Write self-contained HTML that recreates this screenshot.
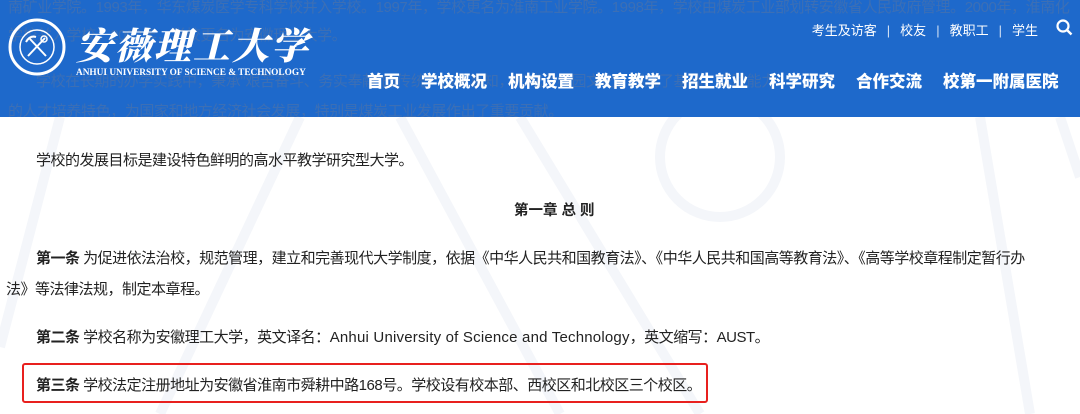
<!DOCTYPE html>
<html><head><meta charset="utf-8"><style>
*{margin:0;padding:0;box-sizing:border-box}
body{width:1080px;height:414px;overflow:hidden;background:#fff;position:relative;font-family:"Liberation Sans","Noto Sans CJK SC",sans-serif;color:#222}
.hdr{position:absolute;left:0;top:0;width:1080px;height:117px;background:#1e69cb;overflow:hidden}
.bg{position:absolute;left:8px;font-size:15px;color:#3c6fb5;white-space:nowrap;letter-spacing:-0.4px}
.logo{position:absolute;left:8px;top:18px}
.title{position:absolute;left:76px;top:16px;font-family:"Noto Serif CJK SC",serif;font-weight:900;font-size:37px;color:#fff;letter-spacing:2px;font-style:italic}
.en{position:absolute;left:76px;top:68px;font-family:"Liberation Serif",serif;font-weight:bold;font-size:9.3px;color:#fff}
.top{position:absolute;right:42px;top:20px;color:#fff;font-size:13px}
.top span{margin:0 10px;opacity:.8}
.nav{position:absolute;left:367px;top:68px;color:#fff;font-weight:bold;font-size:16.5px;white-space:nowrap}
.nav b{margin-right:21px}
.t{position:absolute;font-size:15px;white-space:nowrap;letter-spacing:-0.5px}
.t .e{letter-spacing:0.2px}
.box{position:absolute;left:22px;top:363px;width:686px;height:40px;border:2px solid #e8201e;border-radius:3px}
.wm{position:absolute;left:0;top:117px}
</style></head><body>
<svg class="wm" width="1080" height="297"><g stroke="#f4f6fa" stroke-width="10" fill="none"><path d="M0 230 L60 0"/><path d="M160 297 L300 0"/><path d="M400 0 L560 297"/><path d="M520 0 L700 297"/><path d="M980 0 L1030 297"/><path d="M1060 0 L1080 60"/><circle cx="720" cy="40" r="60"/></g></svg>
<div class="hdr">
<div class="bg" style="top:-4px">南矿业学院。1993年，华东煤炭医学专科学校并入学校。1997年，学校更名为淮南工业学院。1998年，学校由煤炭工业部划转安徽省人民政府管理。2000年，淮南化</div>
<div class="bg" style="top:24px">学校并入学校。2002年，学校更名为安徽理工大学。</div>
<div class="bg" style="top:70px;left:36px">学校在长期的办学实践中，秉承"艰苦奋斗、务实奉献"的传统，追求真知，形成了校园文化，形成了基础、实践能力</div>
<div class="bg" style="top:100px">的人才培养特色，为国家和地方经济社会发展，特别是煤炭工业发展作出了重要贡献。</div>
<svg class="logo" width="58" height="58" viewBox="0 0 58 58"><circle cx="29" cy="29" r="27" fill="none" stroke="#fff" stroke-width="3"/><circle cx="29" cy="29" r="17" fill="none" stroke="#fff" stroke-width="1.5"/><path d="M20 38 L37 20 M22 21 L38 38 M18 24 Q22 17 28 19" stroke="#fff" stroke-width="2" fill="none"/><circle cx="36" cy="21" r="3" fill="none" stroke="#fff" stroke-width="1.5"/></svg>
<div class="title">安薇理工大学</div>
<div class="en">ANHUI UNIVERSITY OF SCIENCE &amp; TECHNOLOGY</div>
<div class="top">考生及访客<span>|</span>校友<span>|</span>教职工<span>|</span>学生</div>
<svg style="position:absolute;left:1056px;top:19px" width="17" height="17"><circle cx="7" cy="7" r="5.5" fill="none" stroke="#fff" stroke-width="2.2"/><path d="M11 11 L15.5 15.5" stroke="#fff" stroke-width="2.4"/></svg>
<div class="nav"><b>首页</b><b>学校概况</b><b>机构设置</b><b>教育教学</b><b>招生就业</b><b>科学研究</b><b>合作交流</b><b style="margin:0">校第一附属医院</b></div>
</div>
<div class="t" style="left:36px;top:149px">学校的发展目标是建设特色鲜明的高水平教学研究型大学。</div>
<div class="t" style="left:514px;top:199px;font-weight:bold;font-size:14.5px;letter-spacing:0">第一章 总 则</div>
<div class="t" style="left:36px;top:247px"><b>第一条</b> 为促进依法治校，规范管理，建立和完善现代大学制度，依据《中华人民共和国教育法》、《中华人民共和国高等教育法》、《高等学校章程制定暂行办</div>
<div class="t" style="left:6px;top:278px">法》等法律法规，制定本章程。</div>
<div class="t" style="left:36px;top:326px"><b>第二条</b> 学校名称为安徽理工大学，英文译名：<span class="e">Anhui University of Science and Technology</span>，英文缩写：AUST。</div>
<div class="t" style="left:36px;top:374px"><b>第三条</b> 学校法定注册地址为安徽省淮南市舜耕中路168号。学校设有校本部、西校区和北校区三个校区。</div>
<div class="box"></div>
</body></html>
